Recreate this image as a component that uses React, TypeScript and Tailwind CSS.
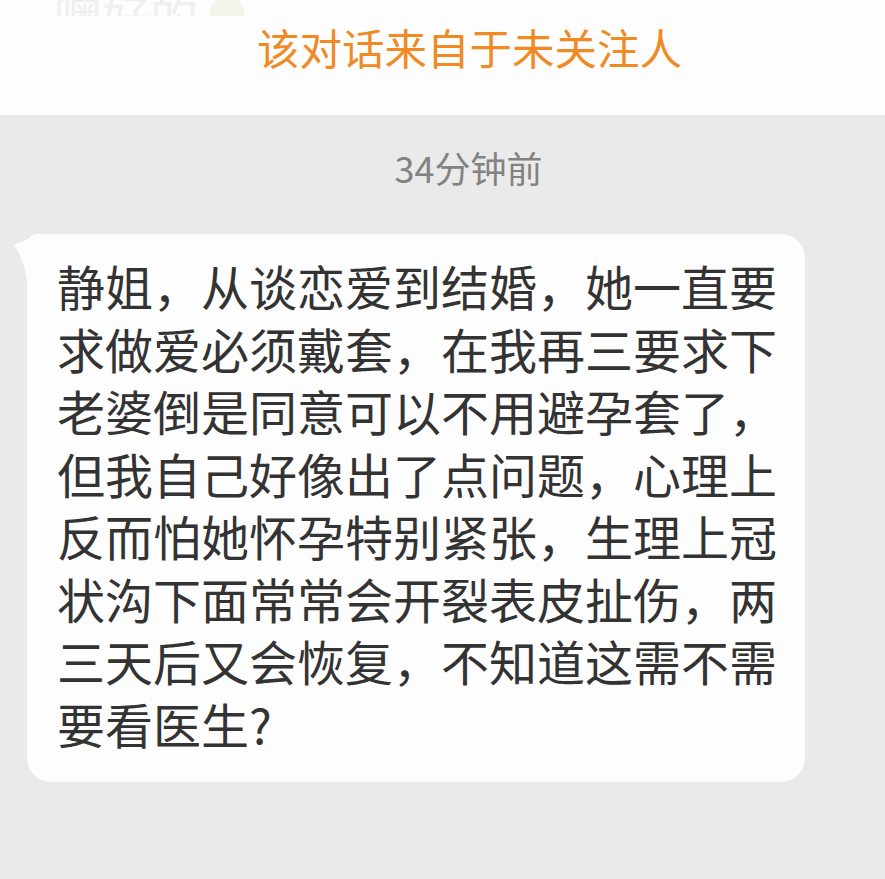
export default function App() {
  const lines = [
    '静姐，从谈恋爱到结婚，她一直要',
    '求做爱必须戴套，在我再三要求下',
    '老婆倒是同意可以不用避孕套了，',
    '但我自己好像出了点问题，心理上',
    '反而怕她怀孕特别紧张，生理上冠',
    '状沟下面常常会开裂表皮扯伤，两',
    '三天后又会恢复，不知道这需不需',
    '要看医生?',
  ];

  return (
    <div
      className="w-[885px] h-[879px] overflow-hidden bg-[#eaeaea]"
      style={{ fontFamily: '"Noto Sans CJK SC", "Noto Sans", sans-serif' }}
    >
      {/* top white strip */}
      <div className="h-[115px] bg-[#fdfdfd] flex flex-col">
        <div className="h-[16px] overflow-hidden pl-[54px] flex items-end gap-[12px]">
          <span className="text-[48px] leading-[48px] text-[#efefef] whitespace-nowrap -mb-[22px]">噢好的</span>
          <span className="w-[34px] h-[34px] rounded-full bg-[#f4f5ea] -mb-[14px]"></span>
        </div>
        <div className="mt-[10px] pl-[54px] text-center text-[42.5px] leading-[42px] text-[#ef8a25]">
          该对话来自于未关注人
        </div>
      </div>

      {/* conversation */}
      <div className="pt-[34px] flex flex-col">
        <div className="pl-[52px] text-center text-[36px] leading-[36px] text-[#828282]">34分钟前</div>

        <div className="mt-[49px] ml-[27px] w-[778px] relative">
          <svg className="absolute -left-[14px] top-0" width="46" height="48" viewBox="0 0 46 48">
            <path d="M38 0 C26 2 10 6 1 11 C6 18 12 30 14 48 L46 48 L46 0 Z" fill="#fdfdfd" />
          </svg>
          <div className="relative bg-[#fdfdfd] rounded-[24px] rounded-tl-[10px] pl-[30px] pr-[28px] pt-[20px] pb-[28px] text-[48px] leading-[62.5px] text-[#333333]">
            {lines.map((l, i) => (
              <div key={i} className="whitespace-nowrap">{l}</div>
            ))}
          </div>
        </div>
      </div>
    </div>
  );
}
